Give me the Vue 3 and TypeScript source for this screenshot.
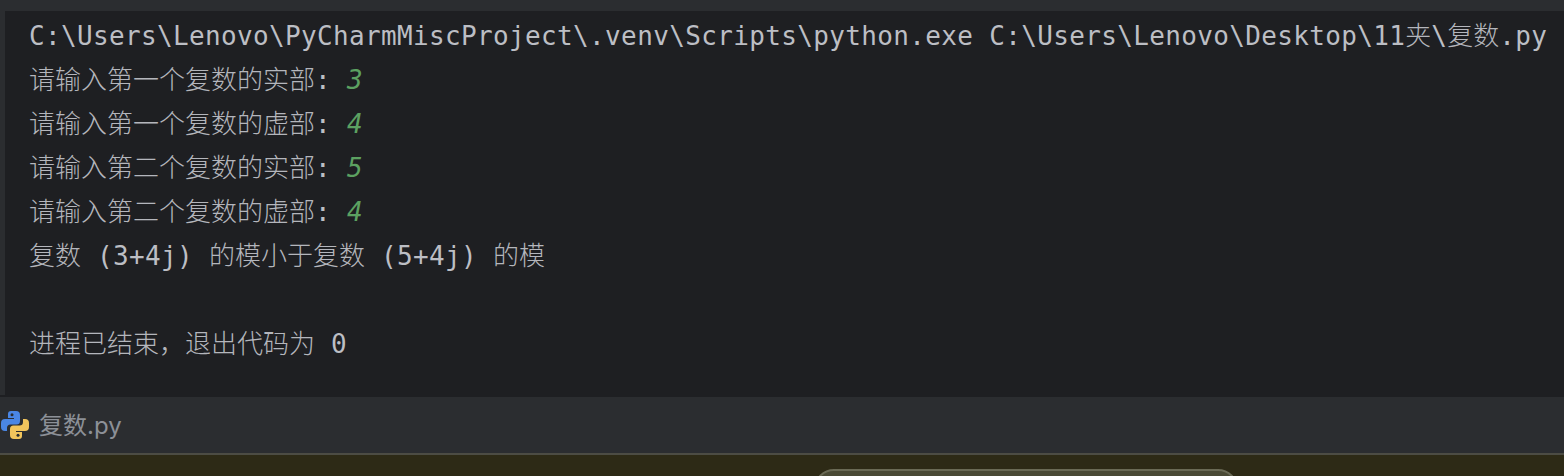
<script setup lang="ts">
interface Seg { text: string; input?: boolean }
interface Run { text: string; latin: boolean }

const lines: Seg[][] = [
  [{ text: 'C:\\Users\\Lenovo\\PyCharmMiscProject\\.venv\\Scripts\\python.exe C:\\Users\\Lenovo\\Desktop\\11夹\\复数.py' }],
  [{ text: '请输入第一个复数的实部: ' }, { text: '3', input: true }],
  [{ text: '请输入第一个复数的虚部: ' }, { text: '4', input: true }],
  [{ text: '请输入第二个复数的实部: ' }, { text: '5', input: true }],
  [{ text: '请输入第二个复数的虚部: ' }, { text: '4', input: true }],
  [{ text: '复数 (3+4j) 的模小于复数 (5+4j) 的模' }],
  [],
  [{ text: '进程已结束\uff0c退出代码为 0' }],
]

// The console font has a 16px cell, so Latin runs get extra tracking and CJK runs don't.
function runs(text: string): Run[] {
  return (text.match(/[\u3000-\u9fff\uff00-\uffef]+|[^\u3000-\u9fff\uff00-\uffef]+/g) ?? []).map((part) => ({
    text: part,
    latin: !/[\u3000-\u9fff\uff00-\uffef]/.test(part),
  }))
}
</script>

<template>
  <div class="page">
    <div class="top"></div>
    <div class="main">
      <div class="gutter"></div>
      <div class="console">
        <div v-for="(line, i) in lines" :key="i" class="line">
          <span v-for="(seg, j) in line" :key="j" :class="{ input: seg.input }">
            <span v-for="(run, k) in runs(seg.text)" :key="k" :class="run.latin ? 'latin' : 'cjk'">{{ run.text }}</span>
          </span>
        </div>
      </div>
    </div>
    <div class="crumb">
      <svg class="py" viewBox="0 0 28 28" width="28" height="28" aria-hidden="true">
        <path fill="#4a86e4" d="M10 0h5a4 4 0 0 1 4 4v6a3.500 3.500 0 0 1-3.500 3.500H9.500A3.500 3.500 0 0 0 6 17v3H4a4 4 0 0 1-4-4v-4a4 4 0 0 1 4-4h9V7H7V3a3 3 0 0 1 3-3z" />
        <path fill="#f2c55c" d="M18 28h-5a4 4 0 0 1-4-4v-6a3.500 3.500 0 0 1 3.500-3.500h6A3.500 3.500 0 0 0 22 11V8h2a4 4 0 0 1 4 4v4a4 4 0 0 1-4 4h-9v1h6v4a3 3 0 0 1-3 3z" />
        <circle cx="11" cy="3.800" r="1.500" fill="#2b2d30" />
        <circle cx="17" cy="24.200" r="1.500" fill="#2b2d30" />
      </svg>
      <span class="fname">复数.py</span>
    </div>
    <div class="taskbar"><div class="pill"></div></div>
  </div>
</template>

<style scoped>
.page {
  width: 1564px;
  height: 476px;
  overflow: hidden;
  display: flex;
  flex-direction: column;
  background: #1e1f22;
}
.top {
  height: 11px;
  background: #2b2d30;
  flex: none;
}
.main {
  display: flex;
  flex: none;
  height: 386px;
}
.gutter {
  width: 5px;
  background: #2b2d30;
  margin-bottom: 2px;
  flex: none;
}
.console {
  padding: 3px 0 0 24px;
  font-family: "DejaVu Sans Mono", "Noto Sans CJK SC", monospace;
  font-size: 26px;
  color: #bcbec4;
  white-space: pre;
}
.line {
  height: 44px;
  line-height: 44px;
}
.latin {
  letter-spacing: 0.35px;
}
.cjk {
  font-weight: 300;
  color: #b4b6bc;
}
.input {
  color: #5ca161;
  font-style: italic;
}
.crumb {
  height: 56px;
  flex: none;
  display: flex;
  align-items: center;
  gap: 10px;
  padding-left: 1px;
  background: #2b2d30;
  border-bottom: 2px solid #4c4c44;
}
.py {
  flex: none;
}
.fname {
  font-family: "Inter", "Noto Sans CJK SC", sans-serif;
  font-size: 24px;
  color: #8c9097;
  margin-bottom: 4px;
}
.taskbar {
  flex: 1;
  background: #2d2a16;
  display: flex;
  justify-content: center;
  padding-top: 14px;
}
.pill {
  width: 424px;
  height: 40px;
  margin-left: 488px;
  box-sizing: border-box;
  background: #4a4a35;
  border: 2px solid #6a6a55;
  border-radius: 20px;
  flex: none;
}
</style>
